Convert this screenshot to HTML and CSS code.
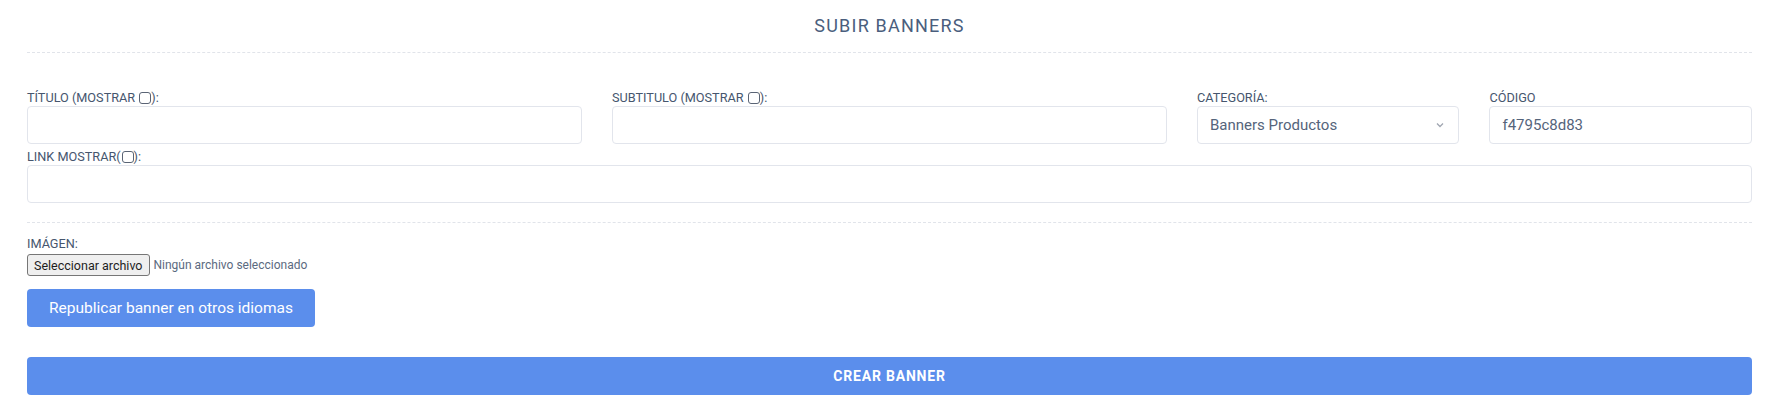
FILE: index.html
```html
<!DOCTYPE html>
<html lang="es">
<head>
<meta charset="utf-8">
<title>Subir banners</title>
<link rel="stylesheet" href="styles.css">
</head>
<body>
<div class="page">
  <div class="header">
    <h2 class="title">SUBIR BANNERS</h2>
  </div>

  <form class="form">
    <div class="row row-first">
      <div class="col col-4">
        <label class="lbl">TÍTULO (MOSTRAR <span class="chk"></span>):</label>
        <div class="input"></div>
      </div>
      <div class="col col-4">
        <label class="lbl">SUBTITULO (MOSTRAR <span class="chk"></span>):</label>
        <div class="input"></div>
      </div>
      <div class="col col-2">
        <label class="lbl">CATEGORÍA:</label>
        <div class="input select">
          <span>Banners Productos</span>
          <svg class="chev" width="8" height="6" viewBox="0 0 8 6"><path d="M1 1.5 L4 4.5 L7 1.5" fill="none" stroke="#a0a6b1" stroke-width="1.3"/></svg>
        </div>
      </div>
      <div class="col col-2">
        <label class="lbl">CÓDIGO</label>
        <div class="input"><span>f4795c8d83</span></div>
      </div>
    </div>

    <div class="row row-second">
      <div class="col col-12">
        <label class="lbl">LINK MOSTRAR(<span class="chk"></span>):</label>
        <div class="input"></div>
      </div>
    </div>

    <div class="sep"></div>

    <div class="image-group">
      <label class="lbl">IMÁGEN:</label>
      <div class="file">
        <span class="file-btn">Seleccionar archivo</span>
        <span class="file-name">Ningún archivo seleccionado</span>
      </div>
    </div>

    <div class="republish">
      <span class="btn btn-small">Republicar banner en otros idiomas</span>
    </div>

    <div class="submit">
      <span class="btn btn-block">CREAR BANNER</span>
    </div>
  </form>
</div>
</body>
</html>
```

FILE: styles.css
```css
* { box-sizing: border-box; }

html, body {
  margin: 0;
  padding: 0;
  background: #ffffff;
}

body {
  font-family: Roboto, "Noto Sans", "Liberation Sans", sans-serif;
  color: #48586f;
}

.page {
  padding: 0 19px 0 27px;
}

.header {
  padding-top: 14px;
  padding-bottom: 14px;
  border-bottom: 1px dashed #e1e4ea;
}

.title {
  margin: 0;
  text-align: center;
  font-size: 18px;
  line-height: 24px;
  font-weight: 400;
  letter-spacing: 1.2px;
  color: #4a5e7d;
}

.form {
  margin: 0;
}

.row {
  display: flex;
  margin: 0 -15px;
}

.row-first {
  margin-top: 37px;
}

.row-second {
  margin-top: 5px;
}

.col {
  padding: 0 15px;
}

.col-4 { flex: 0 0 33.3333%; }
.col-2 { flex: 0 0 16.6667%; }
.col-12 { flex: 0 0 100%; }

.lbl {
  display: block;
  font-size: 12.7px;
  line-height: 16px;
  height: 16px;
  color: #46566e;
  white-space: nowrap;
}

.chk {
  display: inline-block;
  width: 12px;
  height: 12px;
  margin-left: 1px;
  border: 1px solid #5a6475;
  border-radius: 3px;
  vertical-align: -2px;
  background: #fff;
}

.input {
  height: 38px;
  border: 1px solid #e2e5ec;
  border-radius: 4px;
  background: #fff;
  display: flex;
  align-items: center;
  padding: 0 12px;
  font-size: 15px;
  color: #55647b;
}

.select {
  justify-content: space-between;
  padding-right: 14px;
}

.chev {
  display: block;
}

.sep {
  margin-top: 19px;
  border-top: 1px dashed #e1e4ea;
}

.image-group {
  margin-top: 13px;
}

.file {
  margin-top: 2px;
  display: flex;
  align-items: center;
  height: 22px;
}

.file-btn {
  display: inline-flex;
  align-items: center;
  height: 22px;
  padding: 0 6px;
  border: 1px solid #767676;
  border-radius: 3px;
  background: #efefef;
  font-size: 12.5px;
  color: #1e1e1e;
}

.file-name {
  margin-left: 4px;
  font-size: 12px;
  color: #5b6a80;
}

.republish {
  margin-top: 13px;
}

.btn {
  display: inline-flex;
  align-items: center;
  justify-content: center;
  background: #5b8eec;
  color: #ffffff;
  border-radius: 4px;
  height: 38px;
}

.btn-small {
  width: 288px;
  font-size: 15.5px;
}

.submit {
  margin-top: 30px;
}

.btn-block {
  display: flex;
  width: 100%;
  font-size: 14px;
  font-weight: 700;
  letter-spacing: 0.8px;
}
```
